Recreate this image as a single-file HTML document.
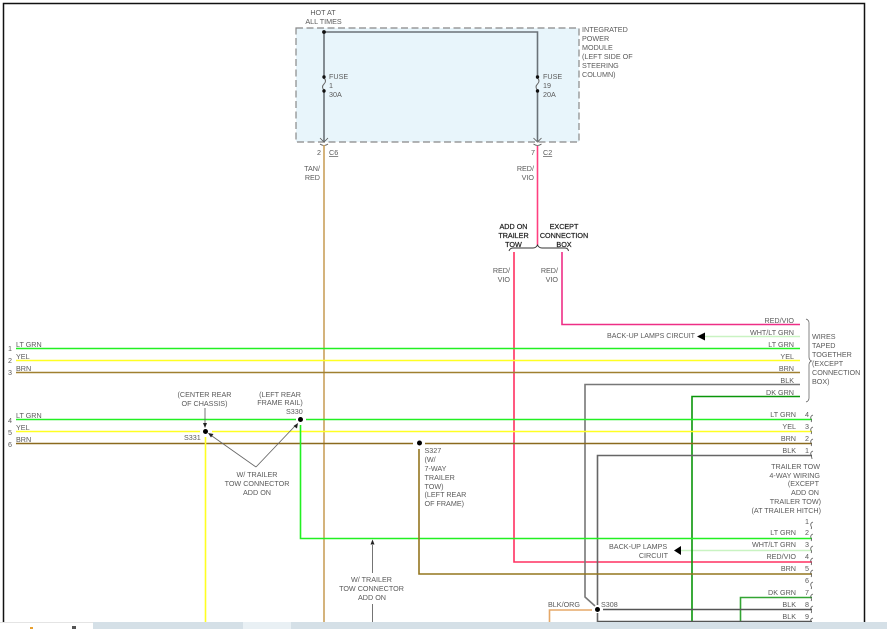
<!DOCTYPE html>
<html><head><meta charset="utf-8"><style>
html,body{margin:0;padding:0;background:#fff;width:887px;height:629px;overflow:hidden}
svg{position:absolute;left:0;top:0;filter:blur(.25px)}
text{font-family:"Liberation Sans",sans-serif;font-size:7.2px;fill:#5a5a5a}
.e{text-anchor:end}.m{text-anchor:middle}
.b{fill:#222;stroke:#222;stroke-width:.22}
.w{fill:none;stroke-width:1.6}
</style></head><body>
<svg width="887" height="629" viewBox="0 0 887 629">
<rect width="887" height="629" fill="#fff"/>
<path d="M3.5 622V3.5H864.5V622" fill="none" stroke="#111" stroke-width="1.5"/>
<!-- IPM box -->
<rect x="296" y="28" width="283" height="114" fill="#e8f5fb" stroke="#888" stroke-width="1.2" stroke-dasharray="7 3.5"/>
<path class="w" stroke="#6a7278" d="M324 32H537.5V141M324 32V141"/>
<rect x="321" y="79" width="6" height="10" fill="#e8f5fb"/>
<rect x="534.500" y="79" width="6" height="10" fill="#e8f5fb"/>
<path d="M324 78q3 3 0 6q-3 3 0 6M537.5 78q3 3 0 6q-3 3 0 6" fill="none" stroke="#666" stroke-width="1"/>
<g fill="#111"><circle cx="324" cy="32" r="1.9"/><circle cx="324" cy="77" r="1.7"/><circle cx="324" cy="91" r="1.7"/><circle cx="537.5" cy="77" r="1.7"/><circle cx="537.5" cy="91" r="1.7"/></g>
<path d="M320 138l4 4 4-4M533.500 138l4 4 4-4" fill="none" stroke="#555" stroke-width=".8"/>
<path d="M320 144q4 3 8 0M533.500 144q4 3 8 0" fill="none" stroke="#555" stroke-width=".8"/>
<!-- main wires -->
<path class="w" stroke="#c9a05c" d="M324 145V622"/>
<path class="w" stroke="#ff3f80" d="M537.500 146V245"/>
<path class="w" stroke="#ff3060" d="M514 252V562H812"/>
<path class="w" stroke="#ee2e86" d="M562 252V324.500H800"/>
<path d="M509 251q1-3 4-3H533q3 0 4.500-3q1.500 3 4.500 3H565q3 0 3.500 3" fill="none" stroke="#333" stroke-width=".9"/>
<!-- harness wires -->
<path class="w" stroke="#c9f3c2" d="M705 336.500H800M681 550.500H812"/>
<path class="w" stroke="#22f022" d="M16 348.500H800"/>
<path class="w" stroke="#ffff22" d="M16 360.500H800"/>
<path class="w" stroke="#a08030" d="M16 372.500H800"/>
<path class="w" stroke="#777" d="M800 384.500H585V597L595 606"/>
<path class="w" stroke="#0a960a" d="M800 396.500H692V622"/>
<path class="w" stroke="#22f022" d="M16 419.500H296M306 419.500H812"/>
<path class="w" stroke="#ffff22" d="M16 431.500H200M212 431.500H812"/>
<path class="w" stroke="#8b6a1e" d="M16 443.500H413M425 443.500H812"/>
<path class="w" stroke="#666" d="M812 455.500H597.500V605M597.500 613V622"/>
<path class="w" stroke="#ffff22" d="M205.500 437V622"/>
<path class="w" stroke="#22f022" d="M300.500 425V538.500H812"/>
<path class="w" stroke="#94761f" d="M419 449V574H812"/>
<path class="w" stroke="#33a533" d="M812 597.500H740.500V622"/>
<path class="w" stroke="#555" d="M603 609.500H812M597.500 621.500H812"/>
<path class="w" stroke="#e5a868" d="M549.500 622V610H592"/>
<g fill="#000"><circle cx="205.500" cy="431.500" r="2.500"/><circle cx="300.500" cy="419.500" r="2.500"/><circle cx="419.500" cy="443" r="2.500"/><circle cx="597.500" cy="609.500" r="2.500"/></g>
<!-- leaders -->
<path d="M205 408V424M256 467L212 436M256 467L295 426M372.500 545V573M372.500 604V622" fill="none" stroke="#666" stroke-width=".9"/>
<path d="M205 428l-2-5h4zM208 433l5.500 1-2.500 3.500zM298 423l-1 5.500-3.500-2.500zM372.500 539.500l-2 5h4z" fill="#222"/>
<path d="M697 336.500l8-4v8zM674 550.500l7-4.500v9z" fill="#000"/>
<!-- connector curls -->
<path d="M806 319q3 1 3 4V357q0 3 2.500 4q-2.500 1-2.500 4V398q0 3-3 4" fill="none" stroke="#666" stroke-width=".8"/>
<path fill="none" stroke="#555" stroke-width=".8" d="M813 415q-3 1-2 4q1 2 0 3M813 427q-3 1-2 4q1 2 0 3M813 439q-3 1-2 4q1 2 0 3M813 451q-3 1-2 4q1 3 1 4M813 522q-3 1-2 4q1 2 0 3M813 534q-3 1-2 4q1 2 0 3M813 546q-3 1-2 4q1 2 0 3M813 558q-3 1-2 4q1 2 0 3M813 570q-3 1-2 4q1 2 0 3M813 582q-3 1-2 4q1 2 0 3M813 594q-3 1-2 4q1 2 0 3M813 606q-3 1-2 4q1 2 0 3M813 618q-3 1-2 3"/>
<!-- text -->
<text class="m" x="323" y="15">HOT AT</text><text class="m" x="323.500" y="24">ALL TIMES</text>
<text x="582" y="32">INTEGRATED</text><text x="582" y="41">POWER</text><text x="582" y="50">MODULE</text><text x="582" y="59">(LEFT SIDE OF</text><text x="582" y="68">STEERING</text><text x="582" y="77">COLUMN)</text>
<text x="329" y="79">FUSE</text><text x="329" y="88">1</text><text x="329" y="97">30A</text>
<text x="543" y="79">FUSE</text><text x="543" y="88">19</text><text x="543" y="97">20A</text>
<text x="317" y="155">2</text><text x="329" y="155" text-decoration="underline">C6</text>
<text x="531" y="155">7</text><text x="543" y="155" text-decoration="underline">C2</text>
<text class="e" x="320" y="171">TAN/</text><text class="e" x="320" y="180">RED</text>
<text class="e" x="534" y="171">RED/</text><text class="e" x="534" y="180">VIO</text>
<text class="m b" x="513.500" y="229">ADD ON</text><text class="m b" x="513.500" y="238">TRAILER</text><text class="m b" x="513.500" y="247">TOW</text>
<text class="m b" x="564" y="229">EXCEPT</text><text class="m b" x="564" y="238">CONNECTION</text><text class="m b" x="564" y="247">BOX</text>
<text class="e" x="510" y="273">RED/</text><text class="e" x="510" y="282">VIO</text>
<text class="e" x="558" y="273">RED/</text><text class="e" x="558" y="282">VIO</text>
<text class="e" x="794" y="323">RED/VIO</text><text class="e" x="794" y="335">WHT/LT GRN</text><text class="e" x="794" y="347">LT GRN</text><text class="e" x="794" y="359">YEL</text><text class="e" x="794" y="371">BRN</text><text class="e" x="794" y="383">BLK</text><text class="e" x="794" y="395">DK GRN</text>
<text x="607" y="338" textLength="88" lengthAdjust="spacingAndGlyphs">BACK-UP LAMPS CIRCUIT</text>
<text x="812" y="339">WIRES</text><text x="812" y="348">TAPED</text><text x="812" y="357">TOGETHER</text><text x="812" y="366">(EXCEPT</text><text x="812" y="375">CONNECTION</text><text x="812" y="384">BOX)</text>
<text x="8" y="351">1</text><text x="8" y="363">2</text><text x="8" y="375">3</text><text x="8" y="423">4</text><text x="8" y="435">5</text><text x="8" y="447">6</text>
<text x="16" y="347">LT GRN</text><text x="16" y="359">YEL</text><text x="16" y="371">BRN</text>
<text x="16" y="418">LT GRN</text><text x="16" y="430">YEL</text><text x="16" y="442">BRN</text>
<text class="m" x="204.500" y="397">(CENTER REAR</text><text class="m" x="204.500" y="406">OF CHASSIS)</text>
<text class="m" x="280" y="397">(LEFT REAR</text><text class="m" x="280" y="405">FRAME RAIL)</text>
<text x="286" y="414">S330</text><text x="184" y="440">S331</text>
<text class="m" x="257" y="477">W/ TRAILER</text><text class="m" x="257" y="486">TOW CONNECTOR</text><text class="m" x="257" y="495">ADD ON</text>
<text x="424.500" y="453">S327</text><text x="424.500" y="462">(W/</text><text x="424.500" y="471">7-WAY</text><text x="424.500" y="480">TRAILER</text><text x="424.500" y="489">TOW)</text><text x="424.500" y="497">(LEFT REAR</text><text x="424.500" y="506">OF FRAME)</text>
<text class="m" x="371.500" y="582">W/ TRAILER</text><text class="m" x="371.500" y="591">TOW CONNECTOR</text><text class="m" x="372" y="600">ADD ON</text>
<text class="e" x="796" y="417">LT GRN</text><text class="e" x="796" y="429">YEL</text><text class="e" x="796" y="441">BRN</text><text class="e" x="796" y="453">BLK</text>
<text x="805" y="417">4</text><text x="805" y="429">3</text><text x="805" y="441">2</text><text x="805" y="453">1</text>
<text class="e" x="820" y="469">TRAILER TOW</text><text class="e" x="820" y="478">4-WAY WIRING</text><text class="e" x="819" y="486">(EXCEPT</text><text class="e" x="819" y="495">ADD ON</text><text class="e" x="821" y="504">TRAILER TOW)</text><text class="e" x="821" y="513">(AT TRAILER HITCH)</text>
<text x="805" y="524">1</text><text x="805" y="535">2</text><text x="805" y="547">3</text><text x="805" y="559">4</text><text x="805" y="571">5</text><text x="805" y="583">6</text><text x="805" y="595">7</text><text x="805" y="607">8</text><text x="805" y="619">9</text>
<text class="e" x="796" y="535">LT GRN</text><text class="e" x="796" y="547">WHT/LT GRN</text><text class="e" x="796" y="559">RED/VIO</text><text class="e" x="796" y="571">BRN</text><text class="e" x="796" y="595">DK GRN</text><text class="e" x="796" y="607">BLK</text><text class="e" x="796" y="619">BLK</text>
<text x="609" y="549">BACK-UP LAMPS</text><text class="e" x="668" y="558">CIRCUIT</text>
<text x="548" y="607">BLK/ORG</text><text x="601" y="607">S308</text>
<!-- bottom bar -->
<rect x="0" y="622" width="887" height="7" fill="#d5e0e7"/>
<rect x="0" y="622" width="93" height="7" fill="#fff"/>
<rect x="0" y="622" width="93" height=".8" fill="#ddd"/>
<rect x="243" y="622" width="48" height="7" fill="#e9f0f4"/>
<rect x="30" y="627" width="3" height="2" fill="#e8a030"/>
<rect x="72" y="626" width="4" height="3" fill="#555"/>
</svg>
</body></html>
